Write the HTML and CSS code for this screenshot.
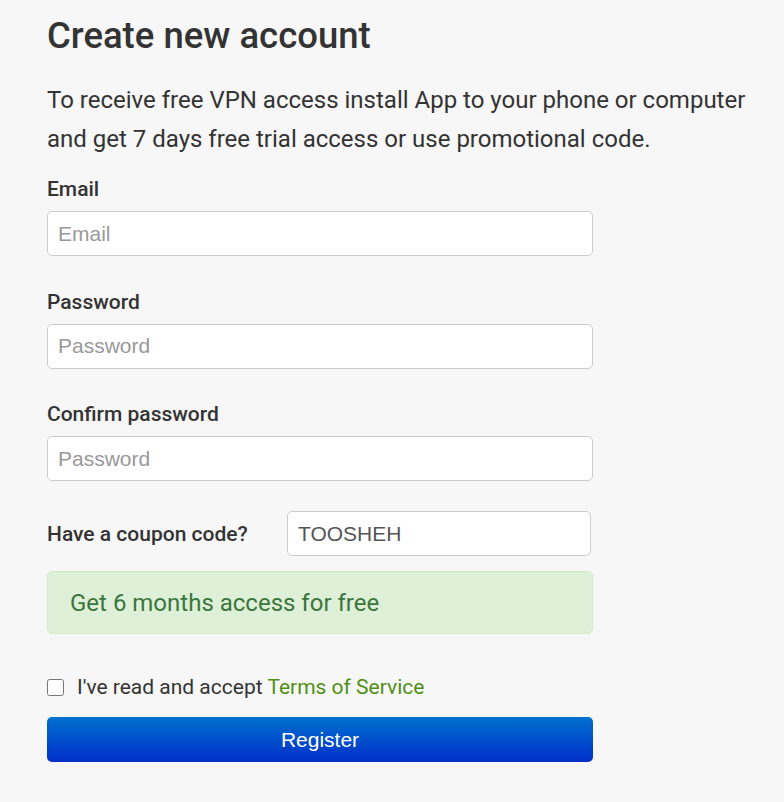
FILE: index.html
```html
<!DOCTYPE html>
<html>
<head>
<meta charset="utf-8">
<link rel="stylesheet" href="styles.css">
</head>
<body>
<main class="page">
  <h1 class="title">Create new account</h1>
  <p class="intro">To receive free VPN access install App to your phone or computer and get 7 days free trial access or use promotional code.</p>
  <form class="form">
    <div class="field">
      <label class="label">Email</label>
      <input class="input" type="text" placeholder="Email">
    </div>
    <div class="field">
      <label class="label">Password</label>
      <input class="input" type="password" placeholder="Password">
    </div>
    <div class="field field-last">
      <label class="label">Confirm password</label>
      <input class="input" type="password" placeholder="Password">
    </div>
    <div class="coupon">
      <label class="label coupon-label">Have a coupon code?</label>
      <input class="input coupon-input" type="text" value="TOOSHEH">
    </div>
    <div class="alert">Get 6 months access for free</div>
    <label class="terms"><input class="check" type="checkbox"><span>I've read and accept <a class="link" href="#">Terms of Service</a></span></label>
    <button class="btn" type="button">Register</button>
  </form>
</main>
</body>
</html>
```
FILE: styles.css
```css
html, body { margin: 0; padding: 0; }
body {
  background: #f7f7f7;
  font-family: Roboto, "Liberation Sans", Arial, sans-serif;
  color: #333;
}
.page {
  padding: 14px 0 0 47px;
  width: 712px;
}
.title {
  font-size: 36.5px;
  font-weight: 500;
  line-height: 44px;
  margin: 0 0 23px;
  color: #333;
}
.intro {
  font-size: 24px;
  line-height: 39px;
  margin: 0 0 17px;
}
.form {
  width: 546px;
  display: flex;
  flex-direction: column;
}
.field {
  display: flex;
  flex-direction: column;
  margin-bottom: 32.5px;
}
.field-last { margin-bottom: 30px; }
.label {
  font-size: 21px;
  font-weight: 500;
  line-height: 26px;
  margin-bottom: 9px;
  color: #333;
}
.input {
  box-sizing: border-box;
  height: 45px;
  border: 1px solid #ccc;
  border-radius: 5px;
  background: #fff;
  padding: 0 10px;
  font-family: "Liberation Sans", Arial, sans-serif;
  font-size: 21px;
  color: #555;
  outline: none;
}
.input::placeholder { color: #999; }
.coupon {
  display: flex;
  align-items: center;
  margin-bottom: 15px;
}
.coupon-label { margin: 0; width: 240px; }
.coupon-input { width: 304px; }
.alert {
  box-sizing: border-box;
  height: 63px;
  display: flex;
  align-items: center;
  padding: 0 22px;
  background: #dff0d8;
  border: 1px solid #d6e9c6;
  border-radius: 5px;
  color: #3c763d;
  font-size: 24px;
}
.terms {
  display: flex;
  align-items: center;
  margin-top: 41px;
  font-size: 21px;
  line-height: 24px;
  color: #333;
}
.check {
  width: 17px;
  height: 17px;
  margin: 0 13px 0 0;
}
.link { color: #4f8f14; text-decoration: none; }
.btn {
  margin-top: 18px;
  height: 45px;
  border: 0;
  border-radius: 5px;
  background: linear-gradient(#0071cf, #002ec9);
  color: #fff;
  font-family: "Liberation Sans", Arial, sans-serif;
  font-size: 21px;
}
```
